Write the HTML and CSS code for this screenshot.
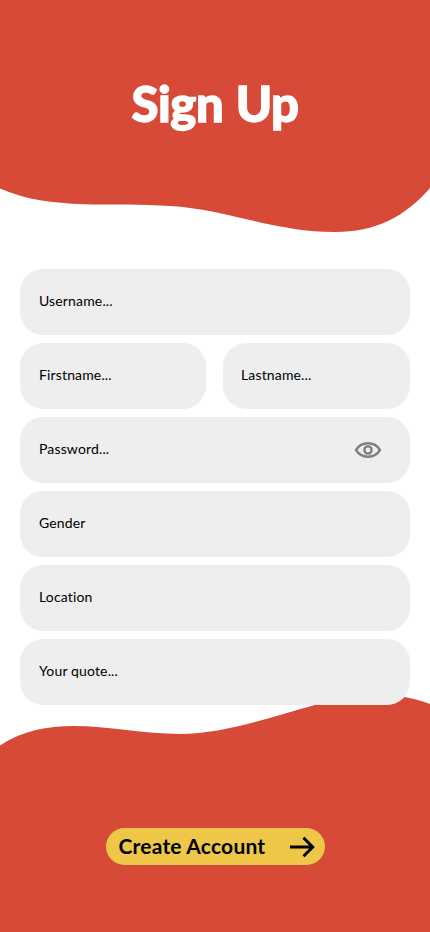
FILE: index.html
```
<!DOCTYPE html>
<html lang="en">

<head>
    <meta charset="UTF-8">
    <meta name="viewport" content="width=device-width, initial-scale=1.0">
    <title>Sign Up</title>
    <link rel="stylesheet" href="styles.css">
</head>

<body>
    <header class="top">
        <svg class="wave" viewBox="0 0 430 232" preserveAspectRatio="none">
            <path d="M0 0H430V188C405 217 375 232 335 232C275 232 225 209 170 206C115 202 50 211 0 188.500Z" />
        </svg>
        <h1>Sign Up</h1>
    </header>

    <form class="signup" id="signup">
        <div class="field"><input type="text" name="username" placeholder="Username..."></div>
        <div class="names">
            <div class="field"><input type="text" name="firstname" placeholder="Firstname..."></div>
            <div class="field last"><input type="text" name="lastname" placeholder="Lastname..."></div>
        </div>
        <div class="field">
            <input type="password" name="password" placeholder="Password...">
            <svg class="eye" viewBox="0 0 28 18">
                <path d="M2 9C7.500 0 20.500 0 26 9C20.500 18 7.500 18 2 9Z" />
                <circle cx="14" cy="9" r="3.600" />
            </svg>
        </div>
        <div class="field"><input type="text" name="gender" placeholder="Gender"></div>
        <div class="field"><input type="text" name="location" placeholder="Location"></div>
        <div class="field"><input type="text" name="quote" placeholder="Your quote..."></div>
    </form>

    <footer class="bottom">
        <svg class="wave" viewBox="0 0 430 236" preserveAspectRatio="none">
            <path d="M0 49.500C54 14 118 38 180 38C225 38 274 20 315 9C355 -2 395 -6 430 8V236H0Z" />
        </svg>
        <button class="create" type="submit" form="signup">
            <span>Create Account</span>
            <svg class="arrow" viewBox="0 0 26 22">
                <path d="M1 11H24M14.500 1.800L23.700 11L14.500 20.200" />
            </svg>
        </button>
    </footer>
</body>

</html>
```
FILE: styles.css
```
* {
    padding: 0;
    margin: 0;
    box-sizing: border-box;
}

body {
    min-height: 932px;
    background-color: white;
    font-family: Lato, "Open Sans", sans-serif;
    overflow-x: hidden;
}

.top {
    position: relative;
    height: 232px;
    padding-top: 73px;
    text-align: center;
}

.wave {
    position: absolute;
    inset: 0;
    width: 100%;
    height: 100%;
    fill: #d74a37;
}

h1 {
    position: relative;
    color: white;
    font-family: Lato, sans-serif;
    font-size: 49px;
    font-weight: 900;
    line-height: 60px;
    letter-spacing: -0.4px;
    word-spacing: 1px;
    -webkit-text-stroke: 1.3px white;
}

.signup {
    position: relative;
    z-index: 1;
    display: flex;
    flex-direction: column;
    gap: 8px;
    padding: 37px 20px 0;
}

.field {
    display: flex;
    align-items: center;
    min-width: 0;
    height: 66px;
    padding: 0 28px 0 19px;
    background-color: #eeeeee;
    border-radius: 23px;
}

.names {
    display: grid;
    grid-template-columns: 186px 1fr;
    gap: 17px;
}

.last {
    padding-left: 18px;
}

input {
    flex: 1;
    min-width: 0;
    padding-bottom: 3px;
    border: none;
    outline: none;
    background: none;
    color: black;
    font-family: inherit;
    font-size: 14px;
    letter-spacing: 0.15px;
}

input::placeholder {
    color: black;
    opacity: 1;
}

.eye {
    width: 28px;
    height: 18px;
    margin-bottom: 1px;
    fill: none;
    stroke: #808080;
    stroke-width: 2.400;
}

.bottom {
    position: relative;
    height: 236px;
    margin-top: -9px;
    padding-top: 132px;
}

.create {
    position: relative;
    display: flex;
    align-items: center;
    justify-content: space-between;
    width: 219px;
    height: 37px;
    margin: 0 auto;
    padding: 0 10px 0 13px;
    border: none;
    border-radius: 19px;
    background-color: #eec648;
    color: black;
    font-family: inherit;
    font-size: 21px;
    font-weight: bold;
    letter-spacing: 0.2px;
    cursor: pointer;
}

.create span {
    padding-bottom: 2px;
}

.arrow {
    width: 26px;
    height: 22px;
    fill: none;
    stroke: black;
    stroke-width: 3;
}
```
